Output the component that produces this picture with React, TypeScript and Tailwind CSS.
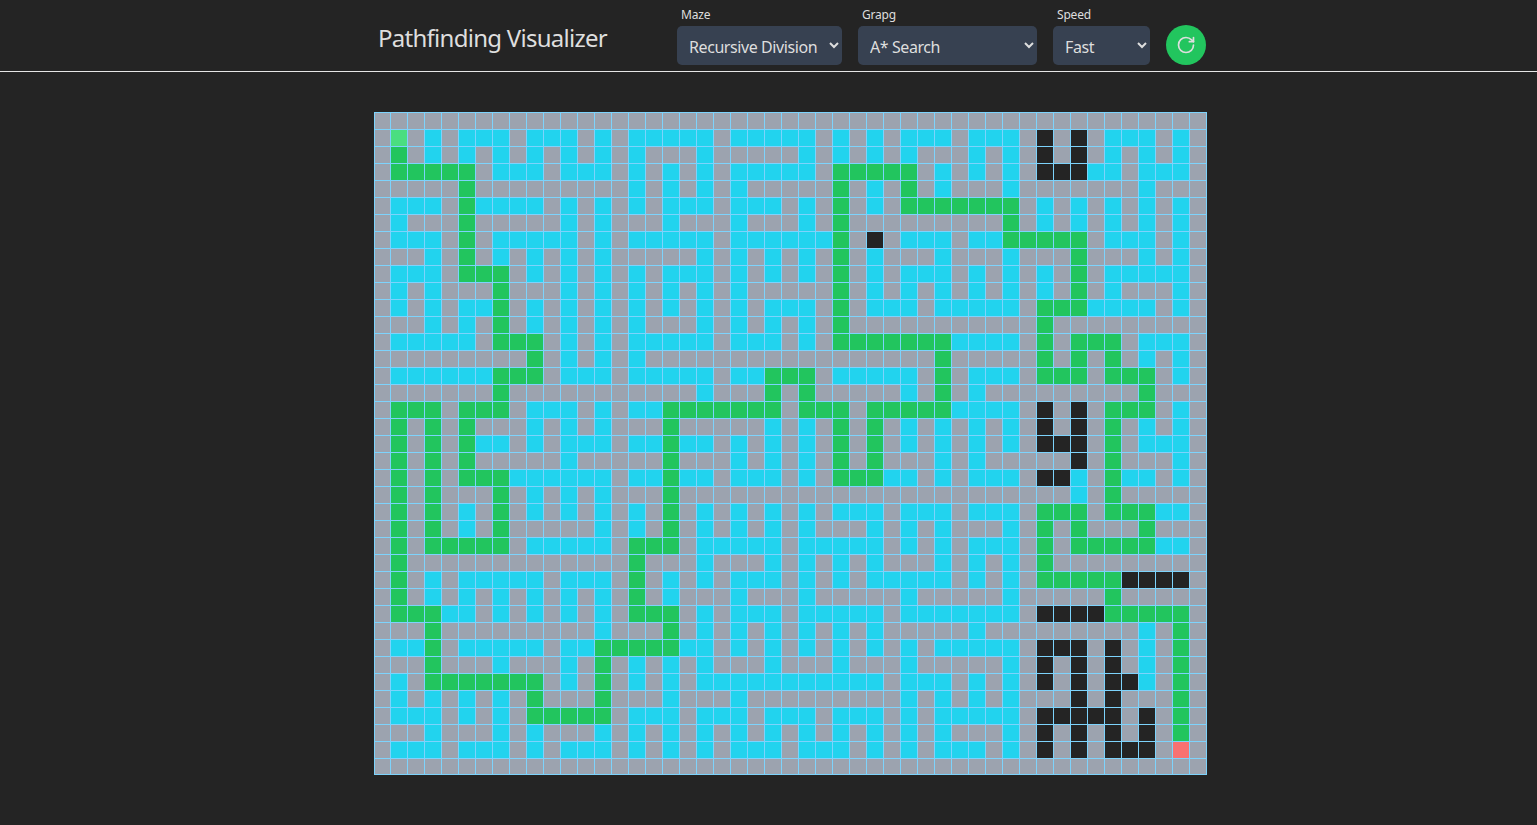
import { RotateCw } from "lucide-react";

// "#" wall, "." empty, "c" visited, "g" path, "s" start, "e" end.
// Spaces only group the columns and are dropped when the rows are read.
const MAZE = [
  "################# ################ ################",
  "#s#c#ccc#ccc#c#cc ccc#ccccc#c#c#cc c#ccc#.#.#ccc#c#",
  "#g#c#c#c#c#c#c#c# ##c#####c#c#c#c# ##c#c#.#.#c#c#c#",
  "#ggggg#ccc#ccc#c# c#c#ccccc#ggggg# c#c#c#...cc#ccc#",
  "#####g#########c# c#c#c#####g#c#g# c###c#######c###",
  "#ccc#gcccc#c#c#c# ccc#ccc#c#g#c#gg ggggg#c#c#c#c#c#",
  "#c###g#####c#c### c###c###c#g##### ####g#c#c#c#c#c#",
  "#ccc#g#ccccc#c#cc ccc#ccccccg#.#cc c#ccggggg#ccc#c#",
  "###c#g#c#c#c#c### ##c#c#c#c#g#c### c###c###g###c#c#",
  "#ccc#ggg#c#c#c#c# ccc#c#c#c#g#c#cc c#c#c#c#g#ccccc#",
  "#c#c###g###c#c#c# c#c#c#####g#c#c# c#c#c#c#g#c###c#",
  "#c#c#ccg#c#c#c#c# c#c#c#ccc#g#ccc# ccccc#gggcccc#c#",
  "###c#c#g#c#c#c#c# ##c#c#c#c#g##### ######g#########",
  "#ccccc#ggg#c#c#cc ccc#ccc#c#gggggg gcccc#g#ggg#ccc#",
  "#########g#c#c#c# ################ g#####g#g#g#c#c#",
  "#ccccccggg#ccc#cc ccc#ccggg#ccccc# g#ccc#ggg#ggg#c#",
  "#######g######### ##c###g#g#####c# g#c#########g###",
  "#ggg#ggg#ccc#c#cc ggggggg#ggg#gggg gcccc#.#.#ggg#c#",
  "#g#g#g###c#c#c### g#####c#c#g#g#c# c#c#c#.#.#g#c#c#",
  "#g#g#gcc#c#ccc#cc gcc#c#c#c#g#g#c# c#c#c#...#g#ccc#",
  "#g#g#g#####c##### g###c#c#c#g#g### c#c#####.#g###c#",
  "#g#g#gggcccccc#cc gcc#ccc#c#gggcc# c#ccc#..c#gcc#c#",
  "#g#g###g#c#c#c### g############### ########c#g#####",
  "#g#g#c#g#c#c#c#c# g#c#c#c#c#ccc#cc c#ccc#ggg#gggcc#",
  "#g#g#c#g#####c#c# g#c#c#c#c###c#c# c###c#g#g###g###",
  "#g#ggggg#ccccc#gg g#ccccc#ccccc#c# c#ccc#g#gggggcc#",
  "#g#############g# ##c###c#c#c#c### c#c#c#g#########",
  "#g#c#ccccc#ccc#g# c#c#ccc#c#c#cccc c#c#c#ggggg....#",
  "#g#c#c#c#c#c#c#g# c###c###c#####c# ####c#####g#####",
  "#gggcc#c#c#c#c#gg g#c#ccc#ccccc#cc ccccc#....ggggg#",
  "###g#########c### g#c#c#c#c#c#c### ##c#########c#g#",
  "#ccg#ccccc#ccgggg gcc#c#c#c#c#c#c# ccccc#...#.#c#g#",
  "###g###c###c#g#c# c#c###c###c###c# ####c#.#.#.#c#g#",
  "#c#ggggggg#c#g#c# c#ccccccccccc#cc c#c#c#.#.#..c#g#",
  "#c#c#c#c#g###g### c###c#########c# c#c#c###.#.###g#",
  "#ccc#c#c#ggggg#cc c#ccc#ccc#ccc#c# ccccc#.....#.#g#",
  "###c###c#c###c#c# c#c#c#c#c#c#c#c# c###c#.#.#.#.#g#",
  "#ccc#ccc#c#ccc#c# c#c#ccc#ccc#c#c# ccc#c#.#.#...#e#",
  "################# ################ ################",
].map((row) => row.replaceAll(" ", "").split(""));

const CELL_COLOR: Record<string, string> = {
  "#": "bg-[#9ca3af]",
  ".": "bg-[#242424]",
  c: "bg-[#22d3ee]",
  g: "bg-[#22c55e]",
  s: "bg-[#4ade80]",
  e: "bg-[#f87171]",
};

function Select({
  label,
  width,
  options,
}: {
  label: string;
  width: string;
  options: string[];
}) {
  const id = label.toLowerCase();
  return (
    <div className={`flex flex-col ${width}`}>
      <label htmlFor={id} className="ml-1 text-[12px] leading-4 tracking-[-0.2px]">
        {label}
      </label>
      <select
        id={id}
        className="mt-[3px] h-[39px] w-full rounded-[5px] bg-[#374151] pt-[2px] pl-2 pr-0 text-[16px] leading-6 tracking-[-0.42px]"
      >
        {options.map((option) => (
          <option key={option}>{option}</option>
        ))}
      </select>
    </div>
  );
}

function Header() {
  return (
    <header className="flex h-18 justify-center border-b border-[#e6e6e6] pl-[43px]">
      <div className="flex w-[832px] justify-between pl-1">
        <h1 className="pt-[20px] text-[24px] leading-9 tracking-[-0.73px]">
          Pathfinding Visualizer
        </h1>
        <div className="flex items-start gap-4 pt-[7px]">
          <Select
            label="Maze"
            width="w-[165px]"
            options={["Recursive Division", "Binary Tree", "No Maze"]}
          />
          <Select
            label="Grapg"
            width="w-[179px]"
            options={["A* Search", "Dijkstra", "Breadth First Search", "Depth First Search"]}
          />
          <Select label="Speed" width="w-[97px]" options={["Fast", "Medium", "Slow"]} />
          <button
            aria-label="Run"
            className="mt-[18px] flex size-10 items-center justify-center rounded-full bg-[#22c55e]"
          >
            <RotateCw size={20} strokeWidth={2} />
          </button>
        </div>
      </div>
    </header>
  );
}

function Grid() {
  return (
    <div>
      {MAZE.map((row, r) => (
        <div key={r} className="flex">
          {row.map((cell, c) => (
            <div
              key={c}
              className={`size-[17px] border-t border-r border-[#7dd3fc] first:border-l ${
                r === MAZE.length - 1 ? "border-b" : ""
              } ${CELL_COLOR[cell]}`}
            />
          ))}
        </div>
      ))}
    </div>
  );
}

export default function App() {
  return (
    <div className="min-h-screen bg-[#242424] font-['Noto_Sans','Open_Sans',sans-serif] text-[#dedede]">
      <Header />
      <main className="flex justify-center pt-10 pl-[44px]">
        <Grid />
      </main>
    </div>
  );
}
